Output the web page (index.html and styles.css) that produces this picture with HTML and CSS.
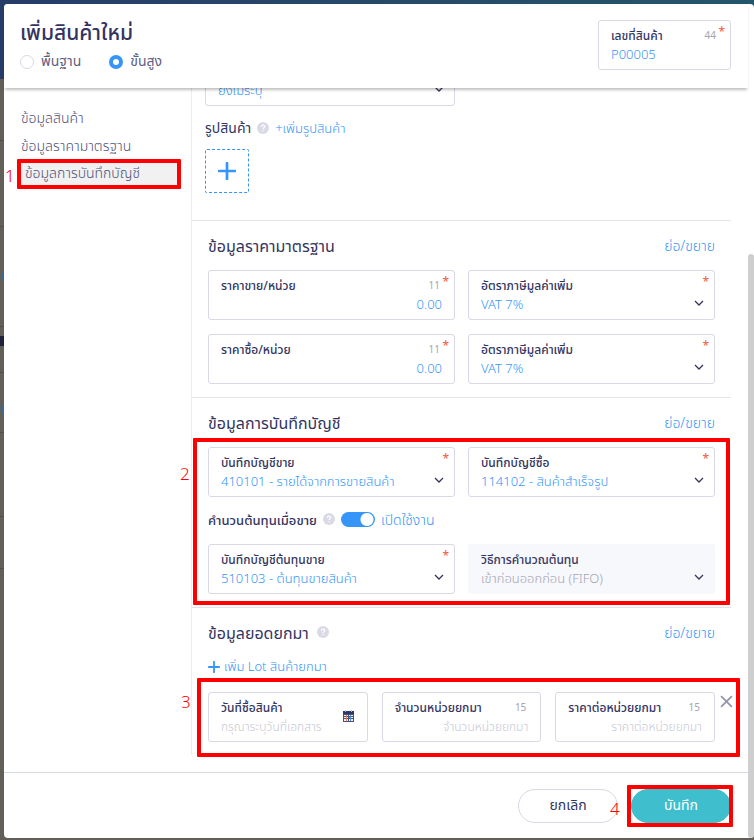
FILE: index.html
```html
<!DOCTYPE html>
<html lang="th">
<head>
<meta charset="utf-8">
<meta name="viewport" content="width=device-width, initial-scale=1">
<title>เพิ่มสินค้าใหม่</title>
<link rel="stylesheet" href="styles.css">
</head>
<body>
<svg class="defs" aria-hidden="true">
  <symbol id="chevron" viewBox="0 0 10 6"><path d="M1 1l4 4 4-4" fill="none" stroke="currentColor" stroke-width="1.3"/></symbol>
  <symbol id="help" viewBox="0 0 12 12"><circle cx="6" cy="6" r="6" fill="#d9dae6"/><path d="M4.4 4.8c0-2.1 3.3-2.1 3.3-.1 0 1.1-1.6 1.2-1.6 2.3M6.1 8v1.2" fill="none" stroke="#fff" stroke-width="1.2"/></symbol>
  <symbol id="plus" viewBox="0 0 16 16"><path d="M8 1v14M1 8h14" fill="none" stroke="currentColor" stroke-width="2.4" stroke-linecap="round"/></symbol>
</svg>
<main class="modal">
  <header class="head">
    <div>
      <h1>เพิ่มสินค้าใหม่</h1>
      <div class="modes">
        <label class="mode"><input type="radio" name="mode">พื้นฐาน</label>
        <label class="mode"><input type="radio" name="mode" checked>ขั้นสูง</label>
      </div>
    </div>
    <div class="field code">
      <div class="top"><label for="code">เลขที่สินค้า</label><span class="count">44</span></div>
      <input id="code" type="text" value="P00005"><span class="req">*</span>
    </div>
  </header>
  <div class="body">
    <nav class="side">
      <a href="#product">ข้อมูลสินค้า</a>
      <a href="#price">ข้อมูลราคามาตรฐาน</a>
      <div class="marked mark-nav"><a class="active" href="#account">ข้อมูลการบันทึกบัญชี</a><span class="num">1</span></div>
    </nav>
    <div class="content">
      <section class="product" id="product">
        <div class="grid">
          <div class="field">
            <div class="top"><label for="supplier">ผู้จำหน่าย</label></div>
            <select id="supplier"><option>ยังไม่ระบุ</option></select>
            <svg class="chev"><use href="#chevron"/></svg>
          </div>
        </div>
        <div class="photo-head"><span>รูปสินค้า</span><svg class="help"><use href="#help"/></svg><a href="#photo">+เพิ่มรูปสินค้า</a></div>
        <button class="photo" type="button" aria-label="เพิ่มรูปสินค้า"><svg><use href="#plus"/></svg></button>
      </section>
      <section id="price">
        <div class="title"><h2>ข้อมูลราคามาตรฐาน</h2><a href="#price">ย่อ/ขยาย</a></div>
        <div class="grid">
          <div class="field">
            <div class="top"><label for="sell">ราคาขาย/หน่วย</label><span class="count">11</span></div>
            <input id="sell" class="right" type="text" value="0.00"><span class="req">*</span>
          </div>
          <div class="field">
            <div class="top"><label for="vat1">อัตราภาษีมูลค่าเพิ่ม</label></div>
            <select id="vat1"><option>VAT 7%</option></select><svg class="chev"><use href="#chevron"/></svg><span class="req">*</span>
          </div>
          <div class="field">
            <div class="top"><label for="buy">ราคาซื้อ/หน่วย</label><span class="count">11</span></div>
            <input id="buy" class="right" type="text" value="0.00"><span class="req">*</span>
          </div>
          <div class="field">
            <div class="top"><label for="vat2">อัตราภาษีมูลค่าเพิ่ม</label></div>
            <select id="vat2"><option>VAT 7%</option></select><svg class="chev"><use href="#chevron"/></svg><span class="req">*</span>
          </div>
        </div>
      </section>
      <section id="account">
        <div class="title"><h2>ข้อมูลการบันทึกบัญชี</h2><a href="#account">ย่อ/ขยาย</a></div>
        <div class="marked mark-account">
          <div class="grid">
            <div class="field">
              <div class="top"><label for="acc1">บันทึกบัญชีขาย</label></div>
              <select id="acc1"><option>410101 - รายได้จากการขายสินค้า</option></select><svg class="chev"><use href="#chevron"/></svg><span class="req">*</span>
            </div>
            <div class="field">
              <div class="top"><label for="acc2">บันทึกบัญชีซื้อ</label></div>
              <select id="acc2"><option>114102 - สินค้าสำเร็จรูป</option></select><svg class="chev"><use href="#chevron"/></svg><span class="req">*</span>
            </div>
          </div>
          <div class="toggle-row">
            <label for="cost">คำนวนต้นทุนเมื่อขาย</label><svg class="help"><use href="#help"/></svg>
            <input id="cost" class="switch" type="checkbox" role="switch" checked><span class="on">เปิดใช้งาน</span>
          </div>
          <div class="grid">
            <div class="field">
              <div class="top"><label for="acc3">บันทึกบัญชีต้นทุนขาย</label></div>
              <select id="acc3"><option>510103 - ต้นทุนขายสินค้า</option></select><svg class="chev"><use href="#chevron"/></svg><span class="req">*</span>
            </div>
            <div class="field disabled">
              <div class="top"><label for="method">วิธีการคำนวณต้นทุน</label></div>
              <select id="method" disabled><option>เข้าก่อนออกก่อน (FIFO)</option></select><svg class="chev"><use href="#chevron"/></svg>
            </div>
          </div>
          <span class="num">2</span>
        </div>
      </section>
      <section id="opening">
        <div class="title"><h2>ข้อมูลยอดยกมา</h2><svg class="help"><use href="#help"/></svg><a href="#opening">ย่อ/ขยาย</a></div>
        <button class="add" type="button"><svg><use href="#plus"/></svg>เพิ่ม Lot สินค้ายกมา</button>
        <div class="marked mark-lot">
          <div class="grid three">
            <div class="field">
              <div class="top"><label for="date">วันที่ซื้อสินค้า</label></div>
              <input id="date" type="text" placeholder="กรุณาระบุวันที่เอกสาร">
              <svg class="cal" viewBox="0 0 12 12" shape-rendering="crispEdges"><path d="M1 1h11v11H1z" fill="#4b4f78"/><path d="M1 1h11v3H1z" fill="#2e3768"/><path d="M3 0h1v2H3zM9 0h1v2H9z" fill="#b9bccb"/><path d="M2 5h2v1H2zM5 5h1v1H5zM7 5h1v1H7zM9 5h2v1H9zM2 7h2v1H2zM5 7h1v1H5zM9 7h2v1H9zM2 9h2v2H2zM5 9h1v2H5zM7 9h1v2H7zM9 9h2v2H9z" fill="#f1f3fb"/><path d="M4 5h1v6H4zM7 7h1v1H7z" fill="#d9805f"/><path d="M8 5h1v6H8z" fill="#4a90d8"/></svg>
            </div>
            <div class="field">
              <div class="top"><label for="qty">จำนวนหน่วยยกมา</label><span class="count">15</span></div>
              <input id="qty" class="right" type="text" placeholder="จำนวนหน่วยยกมา">
            </div>
            <div class="field">
              <div class="top"><label for="unit">ราคาต่อหน่วยยกมา</label><span class="count">15</span></div>
              <input id="unit" class="right" type="text" placeholder="ราคาต่อหน่วยยกมา">
            </div>
          </div>
          <button class="close" type="button" aria-label="ลบ"><svg viewBox="0 0 12 12"><path d="M1 1l10 10M11 1L1 11" fill="none" stroke="#9295aa" stroke-width="1.6"/></svg></button>
          <span class="num">3</span>
        </div>
      </section>
    </div>
  </div>
  <footer class="foot">
    <button class="btn" type="button">ยกเลิก</button>
    <div class="marked mark-save"><button class="btn primary" type="submit">บันทึก</button><span class="num">4</span></div>
  </footer>
  <div class="thumb"></div>
</main>
</body>
</html>
```
FILE: styles.css
```css
* { box-sizing: border-box; }
:root {
  --ink: #33355f;
  --blue: #3595f8;
  --line: #d9d8e6;
  --red: #fe0000;
}
body {
  margin: 0;
  height: 100vh;
  padding: 4px 0 2px 4px;
  overflow: hidden;
  display: flex;
  font: 14px/20px "Noto Sans Thai", "Prompt", "Kanit", Roboto, "Noto Sans", sans-serif;
  color: var(--ink);
  background:
    linear-gradient(#3f6796, #3f6796) 1px 273px / 3px 7px no-repeat,
    linear-gradient(#20223b, #20223b) 0 336px / 4px 10px no-repeat,
    linear-gradient(#3f6796, #3f6796) 2px 405px / 2px 9px no-repeat,
    linear-gradient(#535049, #535049) 0 140px / 4px 1px no-repeat,
    linear-gradient(#535049, #535049) 0 226px / 4px 1px no-repeat,
    linear-gradient(#535049, #535049) 0 326px / 4px 1px no-repeat,
    linear-gradient(#535049, #535049) 0 372px / 4px 1px no-repeat,
    linear-gradient(#535049, #535049) 0 432px / 4px 1px no-repeat,
    linear-gradient(#535049, #535049) 0 516px / 4px 1px no-repeat,
    linear-gradient(#535049, #535049) 0 568px / 4px 1px no-repeat,
    linear-gradient(90deg, #273c69, #24566a) 0 0 / 100% 79px no-repeat,
    #625f59;
}
button, input, select { font: inherit; color: inherit; margin: 0; }
button { cursor: pointer; }
a { color: inherit; text-decoration: none; }
.defs { position: absolute; width: 0; height: 0; }

.modal {
  position: relative;
  flex: 1;
  min-width: 0;
  display: flex;
  flex-direction: column;
  background: #fff;
  border-radius: 4px;
}
.thumb {
  position: absolute;
  right: 0;
  top: 250px;
  bottom: 0;
  width: 6px;
  border-radius: 3px;
  background: #cecece;
}
.head {
  position: relative;
  z-index: 1;
  display: flex;
  justify-content: space-between;
  margin-right: 6px;
  padding: 16px 17px 18px 16px;
  height: 84px;
  background: #fff;
  border-radius: 4px 0 0 0;
  box-shadow: 0 3px 3px -1px rgba(0, 0, 0, .25);
}
h1 { margin: 0; font-size: 21px; line-height: 28px; font-weight: 500; }
.modes { display: flex; gap: 28px; }
.mode { display: flex; align-items: center; gap: 7px; line-height: 28px; color: #5e6082; }
.mode input {
  appearance: none;
  width: 14px;
  height: 14px;
  border: 1px solid var(--line);
  border-radius: 50%;
}
.mode input:checked { border: 4px solid var(--blue); }
.code { width: 133px; }

.body { flex: 1; min-height: 0; display: flex; overflow: hidden; margin-right: 6px; }
.side { width: 188px; padding: 17px 10px 0 17px; border-right: 1px solid #ededf1; margin-bottom: 17px; font-weight: 300; color: #4f5178; }
.side a { display: block; line-height: 28px; white-space: nowrap; }
.side .active { background: #f1f1f1; line-height: 26px; padding-left: 4px; }

.content { flex: 1; min-width: 0; margin-right: 17px; }
section { padding: 0 16px 13px; border-bottom: 1px solid #e4e4e8; }
section:last-child { border: 0; }
.product { margin-top: -32px; padding: 0 276px 27px 13px; }
.product .grid { grid-template-columns: 1fr; }
.photo-head { display: flex; align-items: center; gap: 6px; margin-top: 13px; }
.photo-head a { color: var(--blue); font-size: 13px; font-weight: 300; }
.help { width: 12px; height: 12px; flex: none; margin-bottom: 3px; }
.photo {
  display: flex;
  align-items: center;
  justify-content: center;
  width: 44px;
  height: 44px;
  margin-top: 10px;
  border: 1px dashed var(--blue);
  border-radius: 2px;
  background: #fff;
  color: var(--blue);
}
.photo svg { width: 18px; height: 18px; flex: none; }

.title { display: flex; align-items: center; gap: 8px; height: 49px; padding-top: 2px; }
.title a { margin-left: auto; color: var(--blue); font-weight: 300; }
h2 { margin: 0; font-size: 16px; line-height: 24px; font-weight: 400; }

.grid { display: grid; grid-template-columns: 1fr 1fr; gap: 14px 13px; }
.three { grid-template-columns: 1fr 1fr 1fr; gap: 14px; }
.field {
  position: relative;
  height: 50px;
  padding: 5px 12px 4px;
  border: 1px solid var(--line);
  border-radius: 3px;
  background: #fff;
}
.top { display: flex; justify-content: space-between; font-size: 12px; line-height: 20px; font-weight: 500; white-space: nowrap; }
.count { margin-right: 2px; font-size: 10px; font-weight: 400; color: #a5a5ae; }
.req { position: absolute; right: 5px; top: 1px; font-size: 12px; color: #f2583e; }
.field input, .field select {
  appearance: none;
  display: block;
  width: 100%;
  height: 18px;
  padding: 0;
  border: 0;
  background: none;
  outline: 0;
  color: var(--blue);
  font-size: 13px;
  line-height: 18px;
  font-weight: 300;
  opacity: 1;
}
.field .right { text-align: right; }
.field input:placeholder-shown { font-size: 12px; }
.field input::placeholder { color: #c8c8d3; opacity: 1; }
.chev { position: absolute; right: 10px; top: 29px; width: 10px; height: 6px; }
.cal { position: absolute; right: 13px; top: 17px; width: 12px; height: 12px; }
.disabled { background: #f7f8fc; border-color: #f7f8fc; }
.field.disabled select { color: #a3a4b2; }

.toggle-row { display: flex; align-items: center; gap: 6px; height: 47px; }
.toggle-row label { font-size: 13px; font-weight: 500; }
.switch {
  appearance: none;
  width: 34px;
  height: 15px;
  margin-bottom: 3px;
  border-radius: 8px;
  background: radial-gradient(circle at 26px 50%, #fff 6px, var(--blue) 7px);
}
.on { color: var(--blue); font-weight: 300; }
.add {
  display: flex;
  align-items: center;
  gap: 4px;
  height: 20px;
  margin-bottom: 15px;
  padding: 0;
  border: 0;
  background: none;
  color: var(--blue);
  font-size: 13px;
  font-weight: 300;
}
.add svg { width: 12px; height: 12px; }
.close { position: absolute; right: -18px; top: 3px; width: 13px; height: 13px; padding: 0; border: 0; background: none; }
.close svg { display: block; }

/* Numbered step markers drawn over the form */
.marked { position: relative; }
.marked::after { content: ""; position: absolute; border: 4px solid var(--red); border-radius: 1px; pointer-events: none; }
.num { position: absolute; color: var(--red); font-size: 17px; line-height: 20px; font-weight: 300; }
.mark-nav::after { inset: -2px 0 -2px -4px; }
.mark-nav .num { left: -16px; top: 6px; }
.mark-account::after { inset: -9px -15px -11px -15px; }
.mark-account .num { left: -28px; top: 18px; }
.mark-lot::after { inset: -14px -25px -15px -11px; }
.mark-lot .num { left: -27px; top: 1px; }
.mark-save::after { inset: -4px -2px -5px -4px; }
.mark-save .num { left: -21px; top: 11px; }

.foot {
  display: flex;
  justify-content: flex-end;
  gap: 13px;
  height: 66px;
  margin-right: 6px;
  padding: 16px 17px 16px;
  border-top: 1px solid var(--line);
}
.btn { display: block; width: 100px; height: 34px; border: 1px solid var(--line); border-radius: 17px; background: #fff; }
.primary { border-color: #3fbecd; background: #3fbecd; color: #fff; }
```
